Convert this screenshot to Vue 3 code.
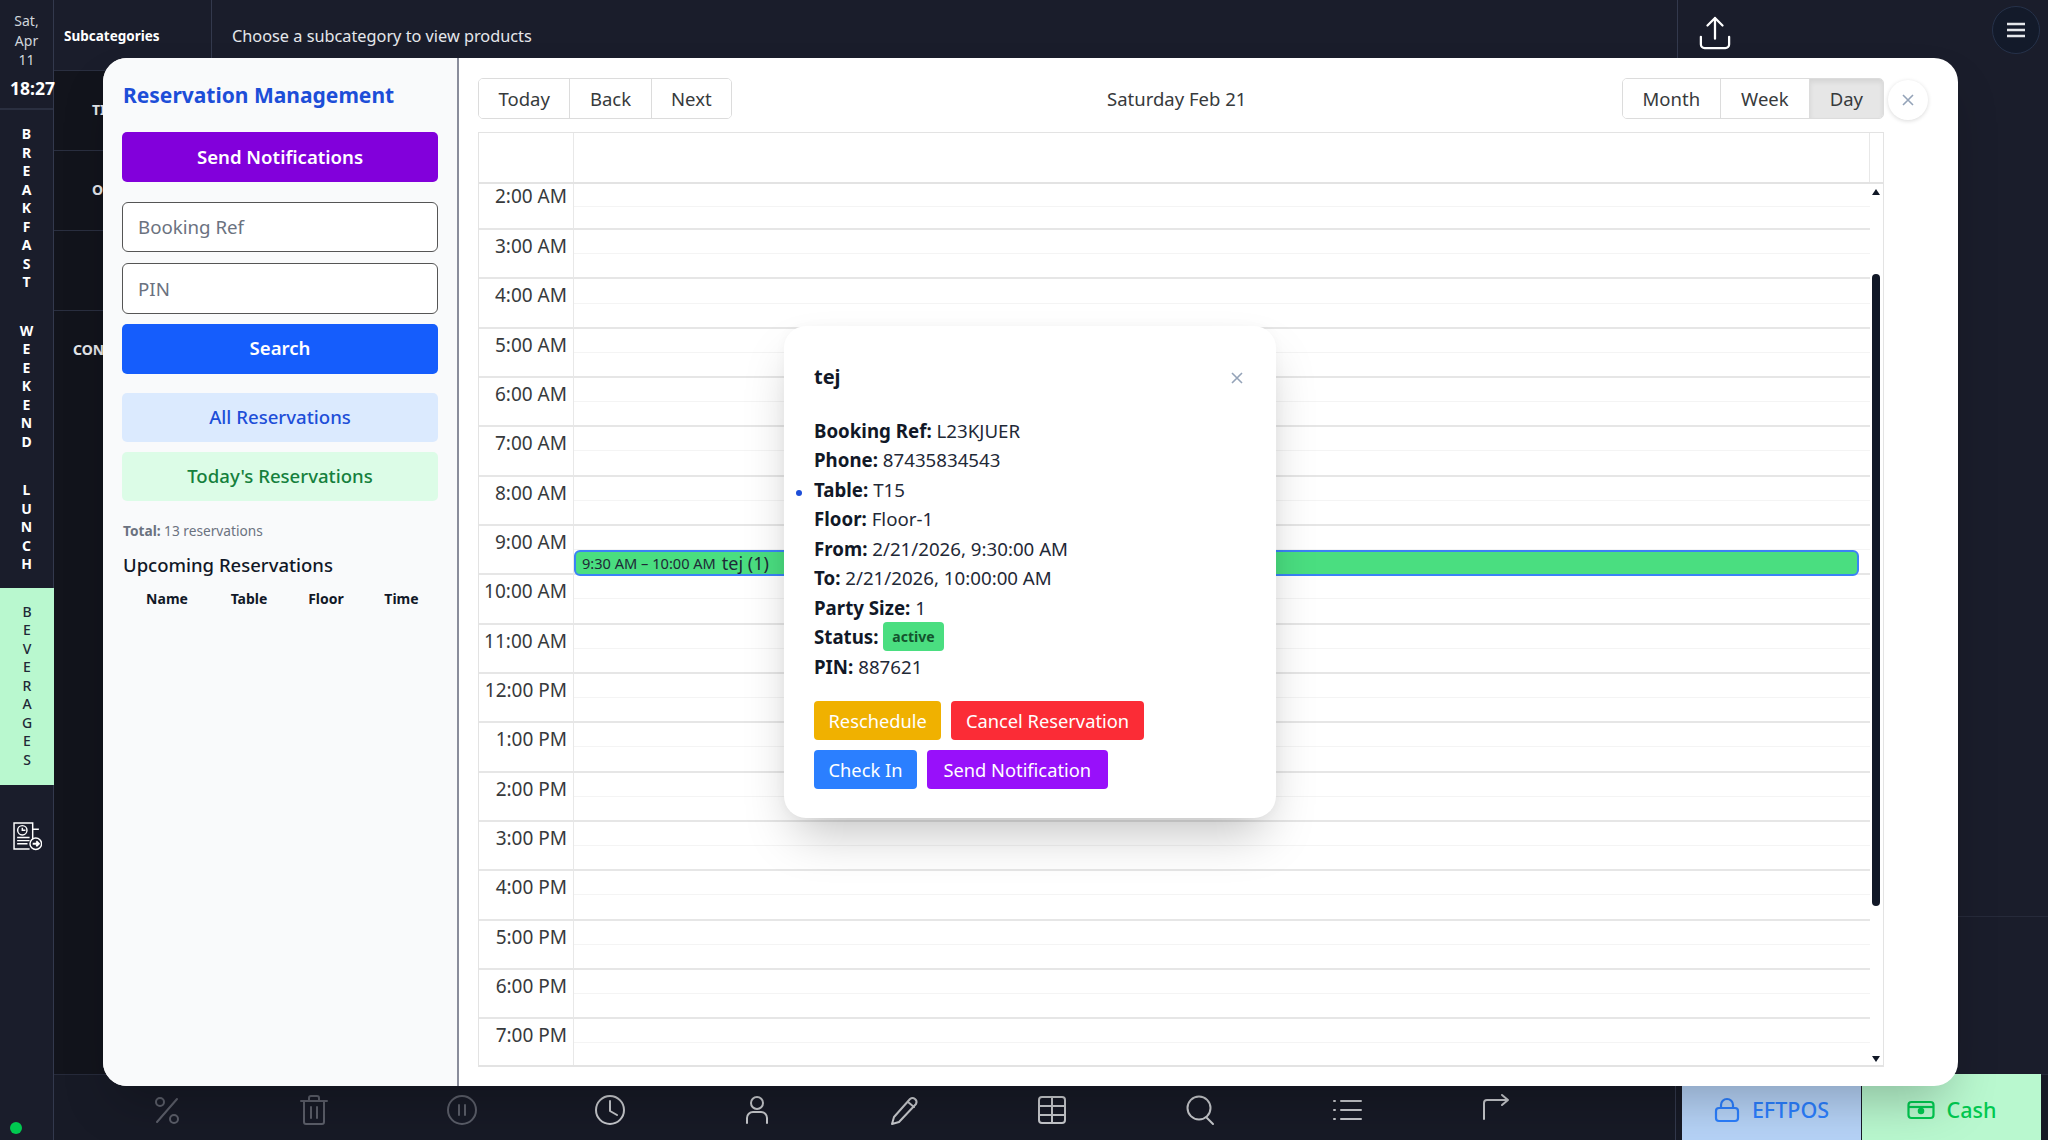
<script setup>
const rail = ['BREAKFAST', 'WEEKEND', 'LUNCH']
const subs = ['TI', 'O', '', 'CON']
const hours = ['2:00 AM', '3:00 AM', '4:00 AM', '5:00 AM', '6:00 AM', '7:00 AM', '8:00 AM', '9:00 AM', '10:00 AM', '11:00 AM', '12:00 PM', '1:00 PM', '2:00 PM', '3:00 PM', '4:00 PM', '5:00 PM', '6:00 PM', '7:00 PM']
const details = [
  ['Booking Ref:', 'L23KJUER'],
  ['Phone:', '87435834543'],
  ['Table:', 'T15'],
  ['Floor:', 'Floor-1'],
  ['From:', '2/21/2026, 9:30:00 AM'],
  ['To:', '2/21/2026, 10:00:00 AM'],
  ['Party Size:', '1'],
]
</script>

<template>
  <div class="pos">
    <!-- category rail -->
    <aside class="rail">
      <div class="clock">
        <div class="date">Sat,<br />Apr<br />11</div>
        <div class="time">18:27</div>
      </div>
      <div class="cats">
        <div v-for="c in rail" :key="c" class="cat">
          <span v-for="(l, i) in c" :key="i">{{ l }}</span>
        </div>
      </div>
      <div class="cat active">
        <span v-for="(l, i) in 'BEVERAGES'" :key="i">{{ l }}</span>
      </div>
      <svg class="rail-icon" viewBox="0 0 28 28" fill="none" stroke="#fff" stroke-width="1.4">
        <path d="M19 17V1H1v25h15" />
        <path d="M19 7h6" />
        <circle cx="9" cy="8" r="4.5" />
        <path d="M9 5.5V8h3" />
        <path d="M4 15h12M4 18h12M4 21h10" />
        <circle cx="22" cy="21" r="5.6" />
        <path d="M19 21h5M22.5 18.6 25 21l-2.5 2.4" stroke-width="1.8" />
      </svg>
      <div class="status-dot"></div>
    </aside>

    <div class="main">
      <header class="topbar">
        <div class="sub-title">Subcategories</div>
        <div class="hint">Choose a subcategory to view products</div>
        <div class="upload">
          <svg viewBox="0 0 34 36" width="32" height="34" fill="none" stroke="#fff" stroke-width="2.4" stroke-linecap="round" stroke-linejoin="round">
            <path d="M17 24V2M9 10l8-8 8 8" />
            <path d="M2 22v8a4 4 0 0 0 4 4h22a4 4 0 0 0 4-4v-8" />
          </svg>
        </div>
      </header>

      <div class="middle">
        <div class="subcol">
          <div v-for="(s, i) in subs" :key="i" class="sub-row">{{ s }}</div>
        </div>
        <div class="products"></div>
        <div class="cart">
          <div class="cart-lines"></div>
        </div>
      </div>

      <footer class="bottom">
        <div class="tools">
          <svg class="tool dim" viewBox="0 0 30 30"><path d="M25 4 5 27" /><circle cx="8" cy="7" r="4" /><circle cx="22" cy="24" r="4" /></svg>
          <svg class="tool dim" viewBox="0 0 30 30"><path d="M2 6h26M10 6V3a2 2 0 0 1 2-2h6a2 2 0 0 1 2 2v3M5 6v21a2 2 0 0 0 2 2h16a2 2 0 0 0 2-2V6M12 12v11M18 12v11" /></svg>
          <svg class="tool dim" viewBox="0 0 30 30"><circle cx="15" cy="15" r="14" /><path d="M12 10v10M18 10v10" /></svg>
          <svg class="tool" viewBox="0 0 30 30"><circle cx="15" cy="15" r="14" /><path d="M15 6v10l7 4" /></svg>
          <svg class="tool" viewBox="0 0 30 30"><circle cx="15" cy="8" r="6" /><path d="M5 28v-5a6 6 0 0 1 6-6h8a6 6 0 0 1 6 6v5" /></svg>
          <svg class="tool" viewBox="0 0 30 30"><path d="M20 4a4 4 0 0 1 6 5L9 27l-7 2 2-7zM18 7l6 5" /></svg>
          <svg class="tool" viewBox="0 0 30 30"><rect x="2" y="2" width="26" height="26" rx="3" /><path d="M2 11h26M2 20h26M15 2v26" /></svg>
          <svg class="tool" viewBox="0 0 30 30"><circle cx="14" cy="13" r="11.5" /><path d="m22 23 6 6" /></svg>
          <svg class="tool" viewBox="0 0 30 30"><path d="M8 6h20M8 15h20M8 24h20M1 6h1M1 15h1M1 24h1" /></svg>
          <svg class="tool" viewBox="0 0 30 30"><path d="M4 24V8a3 3 0 0 1 3-3h21M22 0l6 5-6 5" /></svg>
        </div>
        <div class="pay">
          <button class="pay-btn eftpos">
            <svg viewBox="0 0 26 26" width="26" height="26" fill="none" stroke="#2b7fff" stroke-width="2.2">
              <rect x="2" y="11" width="22" height="13" rx="3" />
              <path d="M7 11V8a6 6 0 0 1 12 0v3" />
            </svg>
            EFTPOS
          </button>
          <button class="pay-btn cash">
            <svg viewBox="0 0 28 20" width="28" height="20" fill="none" stroke="#00c950" stroke-width="2.2">
              <rect x="1.5" y="2" width="25" height="16" rx="3" />
              <path d="M1.5 7h25" />
              <circle cx="14" cy="11" r="2.2" fill="#00c950" />
            </svg>
            Cash
          </button>
        </div>
      </footer>
    </div>

    <!-- reservations modal -->
    <div class="modal">
      <section class="panel">
        <h1 class="panel-title">Reservation Management</h1>
        <button class="act purple">Send Notifications</button>
        <input class="field first-field" placeholder="Booking Ref" />
        <input class="field pin-field" placeholder="PIN" />
        <button class="act blue">Search</button>
        <button class="soft all">All Reservations</button>
        <button class="soft today">Today's Reservations</button>
        <p class="total"><b>Total:</b> 13 reservations</p>
        <h2 class="upcoming">Upcoming Reservations</h2>
        <div class="thead">
          <span>Name</span><span>Table</span><span>Floor</span><span>Time</span>
        </div>
      </section>

      <section class="calendar">
        <div class="toolbar">
          <div class="btn-group">
            <button>Today</button><button>Back</button><button>Next</button>
          </div>
          <div class="cal-label">Saturday Feb 21</div>
          <div class="btn-group views">
            <button>Month</button><button>Week</button><button class="on">Day</button>
          </div>
        </div>
        <button class="cal-close">
          <svg viewBox="0 0 14 14" width="14" height="14" stroke="#94a3b8" stroke-width="1.6"><path d="m2 2 10 10M12 2 2 12" /></svg>
        </button>

        <div class="grid">
          <div class="grid-head">
            <div class="head-gutter"></div>
            <div class="head-main"></div>
          </div>
          <div class="grid-body">
            <div class="rows">
              <div v-for="(h, i) in hours" :key="h" class="row" :class="{ first: i === 0 }">
                <div class="label">{{ h }}</div>
                <div class="cell"><div class="slot"></div><div class="slot"></div></div>
              </div>
              <div class="event">
                <span class="ev-time">9:30 AM – 10:00 AM</span>
                <span class="ev-name">tej (1)</span>
              </div>
            </div>
            <div class="scrollbar">
              <i class="up"></i>
              <i class="thumb"></i>
              <i class="down"></i>
            </div>
          </div>
        </div>
      </section>

      <div class="popup">
        <div class="popup-head">
          <span class="popup-name">tej</span>
          <svg class="popup-x" viewBox="0 0 14 14" width="14" height="14" stroke="#94a3b8" stroke-width="1.6"><path d="m2 2 10 10M12 2 2 12" /></svg>
        </div>
        <div v-for="d in details" :key="d[0]" class="line"><b>{{ d[0] }}</b> {{ d[1] }}</div>
        <div class="line"><b>Status:</b> <span class="badge">active</span></div>
        <div class="line"><b>PIN:</b> 887621</div>
        <i class="dot"></i>
        <div class="popup-actions">
          <button class="pb amber">Reschedule</button>
          <button class="pb red">Cancel Reservation</button>
          <button class="pb sky">Check In</button>
          <button class="pb violet">Send Notification</button>
        </div>
      </div>
    </div>

    <button class="menu">
      <svg viewBox="0 0 20 16" width="20" height="16" stroke="#e5e7eb" stroke-width="2.4"><path d="M1 2h18M1 8h18M1 14h18" /></svg>
    </button>
  </div>
</template>

<style>
html, body { margin: 0; background: #1a1d2b; }
</style>

<style scoped>
* { box-sizing: border-box; }
button { font-family: inherit; cursor: pointer; }

.pos {
  position: relative;
  display: flex;
  width: 2048px;
  height: 1140px;
  overflow: hidden;
  background: #1a1d2b;
  color: #fff;
  font-family: "Noto Sans", "Open Sans", sans-serif;
}

/* rail */
.rail {
  position: relative;
  width: 54px;
  flex: none;
  border-right: 1px solid #33394d;
  display: flex;
  flex-direction: column;
}
.clock { height: 110px; flex: none; border-bottom: 2px solid #2a2f40; text-align: center; padding-top: 11px; }
.date { font-size: 14px; line-height: 19.5px; color: #d1d5db; }
.time { font-size: 17.5px; font-weight: 700; line-height: 22px; margin-top: 7px; white-space: nowrap; padding-left: 10px; }
.cats { padding-top: 15px; display: flex; flex-direction: column; gap: 30px; }
.cat {
  display: flex;
  flex-direction: column;
  align-items: center;
  font-size: 14px;
  font-weight: 700;
  line-height: 18.5px;
}
.cat.active {
  background: #b9f8cf;
  color: #1f2937;
  font-weight: 500;
  height: 197px;
  padding-top: 15px;
  margin: 14px -1px 0 0;
  flex: none;
}
.rail-icon { width: 29px; height: 29px; margin: 37px 0 0 13px; flex: none; }
.status-dot { position: absolute; left: 10px; top: 1122px; width: 12px; height: 12px; border-radius: 50%; background: #00c950; }

/* top + body */
.main { flex: 1; display: flex; flex-direction: column; min-width: 0; }
.topbar { height: 70px; display: flex; align-items: center; flex: none; }
.sub-title { width: 158px; height: 100%; border-right: 1px solid #33394d; padding-left: 10px; line-height: 72px; font-size: 13.5px; font-weight: 700; }
.hint { flex: 1; padding-left: 20px; font-size: 16.3px; line-height: 72px; height: 100%; color: #e5e7eb; }
.upload { width: 371px; height: 100%; border-left: 1px solid #33394d; padding: 16px 0 0 21px; }

.middle { flex: 1; display: flex; min-height: 0; }
.subcol { width: 158px; background: #12141c; border-top: 1px solid #2a2f40; }
.sub-row { height: 80px; border-bottom: 1px solid #2a2f40; font-size: 14px; font-weight: 700; line-height: 78px; padding-left: 38px; color: #e5e7eb; }
.sub-row:nth-child(4) { border-bottom: none; padding-left: 19px; }
.products { flex: 1; }
.cart { width: 371px; }
.cart-lines { height: 847px; border-bottom: 1px solid #262a3a; }

.bottom { height: 66px; flex: none; display: flex; align-items: flex-end; border-top: 1px solid #262a3a; background: #171a26; }
.tools { width: 1621px; height: 66px; display: flex; padding-left: 39px; align-items: center; }
.tool { width: 30px; height: 30px; margin: 5px 58.8px 0; fill: none; stroke: #c6c8cc; stroke-width: 2; stroke-linecap: round; stroke-linejoin: round; flex: none; overflow: visible; }
.tool.dim { stroke: #5b5e69; }
.pay { display: flex; gap: 1px; height: 66px; flex: none; padding-left: 6px; border-left: 1px solid #33394d; }
.pay-btn { border: none; width: 179px; height: 66px; display: flex; align-items: center; justify-content: center; gap: 12px; font-size: 21.5px; font-weight: 500; padding-top: 6px; }
.eftpos { background: #b6d3f7; color: #2b7fff; }
.cash { background: #b9f8cf; color: #00c950; }

.menu {
  position: absolute;
  top: 6px;
  left: 1992px;
  width: 48px;
  height: 48px;
  border-radius: 50%;
  background: #131a2a;
  border: 1px solid #26324a;
  display: grid;
  place-items: center;
  padding: 0;
}

/* modal */
.modal {
  position: absolute;
  left: 103px;
  top: 58px;
  width: 1855px;
  height: 1028px;
  border-radius: 24px;
  background: #fff;
  display: flex;
  overflow: visible;
  box-shadow: 0 25px 50px -12px rgba(0, 0, 0, .25);
  color: #111827;
}
.panel {
  width: 356px;
  flex: none;
  padding: 19px 19px 0 19px;
  background: #f9fafb;
  border-right: 2px solid #8a8d9b;
  border-radius: 24px 0 0 24px;
  display: flex;
  flex-direction: column;
}
.panel-title { margin: 0 0 19px 1px; font-size: 21px; line-height: 36px; font-weight: 700; color: #1d4ed8; white-space: nowrap; }
.act, .soft { width: 100%; border: none; border-radius: 5px; font-size: 18.6px; flex: none; padding: 0 0 2px; }
.act { height: 50px; color: #fff; font-weight: 600; }
.purple { background: #8200db; }
.blue { background: #155dfc; margin-top: 10px; }
.field {
  width: 100%;
  height: 50px;
  padding: 0 15px;
  border: 1.5px solid #555;
  border-radius: 6px;
  font: 18.7px "Noto Sans", sans-serif;
  background: #fff;
  flex: none;
}
.field::placeholder { color: #6b7280; }
.first-field { margin-top: 19.5px; }
.pin-field { margin-top: 11px; height: 51px; }
.soft { height: 49px; font-weight: 500; }
.all { background: #dbeafe; color: #1d4ed8; margin-top: 19px; }
.today { background: #dcfce7; color: #15803d; margin-top: 10px; }
.total { margin: 20px 0 0 1px; font-size: 13.7px; line-height: 20px; color: #6b7280; }
.upcoming { margin: 11px 0 0 1px; font-size: 18.5px; line-height: 26px; font-weight: 500; color: #111827; }
.thead { margin-top: 11.5px; display: grid; grid-template-columns: 90px 74px 80px 71px; text-align: center; font-size: 14px; line-height: 20px; font-weight: 700; }

/* calendar */
.calendar { position: relative; flex: 1; padding: 20px 74px 19px 19px; display: flex; flex-direction: column; min-width: 0; }
.toolbar { display: flex; align-items: center; justify-content: space-between; height: 41px; margin-bottom: 13px; flex: none; position: relative; }
.cal-label { position: absolute; left: 629px; font-size: 18.5px; color: #373a3c; white-space: nowrap; }
.btn-group { display: flex; height: 100%; border: 1px solid #dcdcdc; border-radius: 5px; overflow: hidden; }
.btn-group button { border: none; background: #fff; border-left: 1px solid #dcdcdc; font-size: 18.5px; color: #373a3c; padding: 0 19.5px; }
.btn-group button:first-child { border-left: none; }
.btn-group.views button { padding: 0 20px; }
.btn-group button.on { background: #e6e6e6; box-shadow: inset 0 3px 5px rgba(0, 0, 0, .08); }
.cal-close {
  position: absolute;
  left: 1429px;
  top: 22px;
  width: 40px;
  height: 40px;
  border: none;
  border-radius: 50%;
  background: #fff;
  box-shadow: 0 1px 4px rgba(0, 0, 0, .15);
  display: grid;
  place-items: center;
  padding: 0;
}
.grid { flex: 1; border: 1px solid #e3e3e3; border-bottom-width: 2px; display: flex; flex-direction: column; min-height: 0; }
.grid-head { display: flex; height: 51px; flex: none; border-bottom: 2px solid #e3e3e3; }
.head-gutter { width: 95px; border-right: 1px solid #e8e8e8; }
.head-main { flex: 1; border-right: 1px solid #e8e8e8; margin-right: 13px; }
.grid-body { flex: 1; display: flex; min-height: 0; }
.rows { position: relative; flex: 1; min-width: 0; overflow: hidden; }
.row { display: flex; height: 49.33px; }
.row.first { height: 46px; }
.label { width: 95px; flex: none; padding: 3px 6px 0 0; border-right: 1px solid #e8e8e8; border-bottom: 2px solid #e6e6e6; text-align: right; font-size: 19px; line-height: 26px; color: #373a3c; white-space: nowrap; }
.row.first .label { padding-top: 0; line-height: 24px; }
.cell { flex: 1; display: flex; flex-direction: column; border-bottom: 2px solid #e6e6e6; }
.slot { flex: 1; }
.slot:first-child { border-bottom: 1px solid #f4f4f4; }
.event {
  position: absolute;
  left: 95px;
  right: 11px;
  top: 366px;
  height: 26px;
  background: #4ade80;
  border: 2px solid #3b82f6;
  border-radius: 6px;
  display: flex;
  align-items: center;
  gap: 6px;
  padding-left: 6px;
  color: #1f2937;
  white-space: nowrap;
}
.ev-time { font-size: 14.6px; }
.ev-name { font-size: 18px; line-height: 20px; }
.scrollbar { position: relative; width: 13px; flex: none; }
.scrollbar i { position: absolute; display: block; }
.up { top: 5px; left: 2px; border: 4px solid transparent; border-top: none; border-bottom: 6px solid #111827; }
.down { bottom: 3px; left: 2px; border: 4px solid transparent; border-bottom: none; border-top: 6px solid #111827; }
.thumb { top: 90px; left: 2px; width: 8px; height: 632px; border-radius: 4px; background: #111827; }

/* popup */
.popup {
  position: absolute;
  left: 681px;
  top: 268px;
  width: 492px;
  height: 492px;
  padding: 35px 30px 0;
  border-radius: 22px;
  background: #fff;
  box-shadow: 0 25px 50px -12px rgba(0, 0, 0, .25), 0 0 12px rgba(0, 0, 0, .03);
}
.popup-head { display: flex; align-items: center; justify-content: space-between; height: 30px; margin-bottom: 24.5px; padding-right: 2px; }
.popup-x { margin-top: 4px; }
.popup-name { font-size: 20px; font-weight: 700; }
.line { height: 29.55px; font-size: 18.7px; line-height: 29.55px; white-space: nowrap; color: #1f2937; }
.line b { color: #111827; }
.badge { display: inline-block; height: 29px; line-height: 29px; padding: 0 9px; vertical-align: top; border-radius: 4px; background: #4ade80; font-size: 14px; font-weight: 700; color: #14532d; }
.dot { position: absolute; left: 12px; top: 164px; width: 6px; height: 6px; border-radius: 50%; background: #1d4ed8; }
.popup-actions { margin-top: 19.5px; display: flex; flex-wrap: wrap; gap: 10px; }
.pb { height: 39px; padding: 0 14.5px; border: none; border-radius: 4px; color: #fff; font-size: 18.3px; white-space: nowrap; }
.amber { background: #f0b100; }
.red { background: #fb2c36; }
.sky { background: #2b7fff; }
.violet { background: #9810fa; padding: 0 16.5px; }
</style>
